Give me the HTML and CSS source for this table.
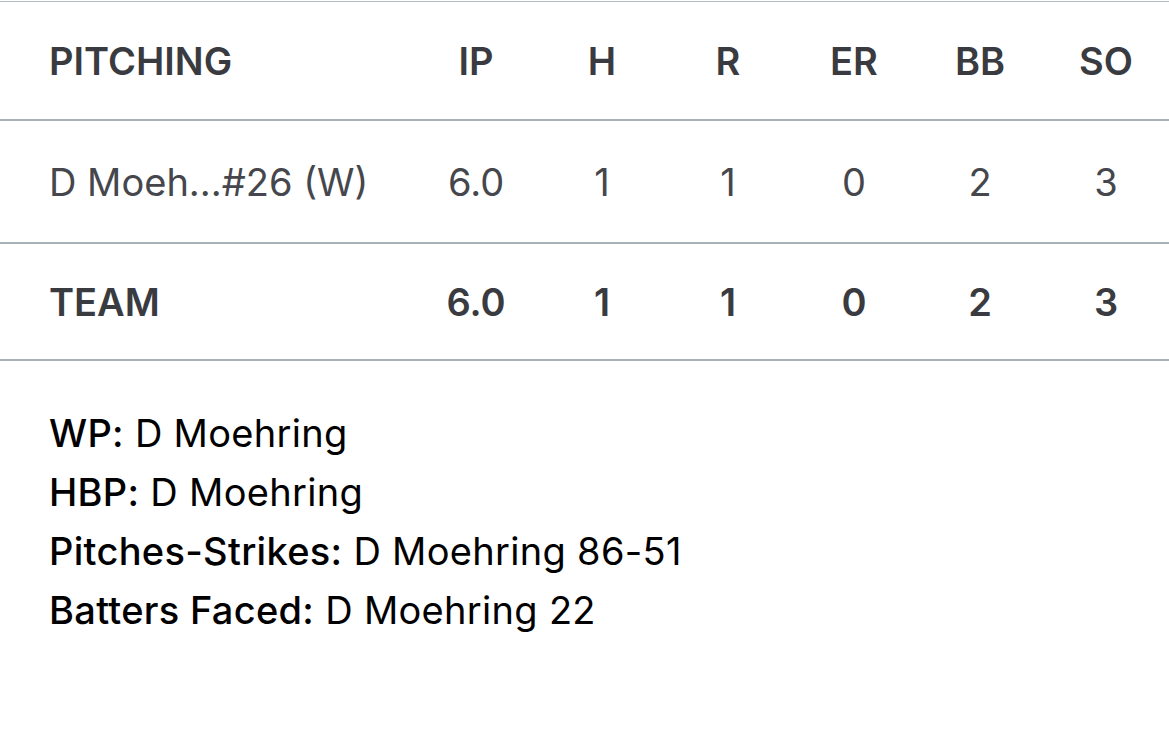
FILE: index.html
```html
<!DOCTYPE html>
<html>
<head>
<meta charset="utf-8">
<link rel="stylesheet" href="styles.css">
</head>
<body>
<div class="box">
  <div class="row head">
    <div class="name">PITCHING</div>
    <div class="c">IP</div><div class="c">H</div><div class="c">R</div><div class="c">ER</div><div class="c">BB</div><div class="c">SO</div>
  </div>
  <div class="row player">
    <div class="name">D Moeh...#26 (W)</div>
    <div class="c">6.0</div><div class="c">1</div><div class="c">1</div><div class="c">0</div><div class="c">2</div><div class="c">3</div>
  </div>
  <div class="row team">
    <div class="name">TEAM</div>
    <div class="c">6.0</div><div class="c">1</div><div class="c">1</div><div class="c">0</div><div class="c">2</div><div class="c">3</div>
  </div>
  <div class="notes">
    <div class="note"><span class="lbl">WP:</span> D Moehring</div>
    <div class="note"><span class="lbl">HBP:</span> D Moehring</div>
    <div class="note"><span class="lbl">Pitches-Strikes:</span> D Moehring 86-51</div>
    <div class="note"><span class="lbl">Batters Faced:</span> D Moehring 22</div>
  </div>
</div>
</body>
</html>
```
FILE: styles.css
```css
html, body {
  margin: 0;
  padding: 0;
  background: #ffffff;
}
body {
  font-family: Inter, "Noto Sans", "Liberation Sans", sans-serif;
  color: #000;
}
.box {
  margin-top: 1px;
  border-top: 1px solid #b3bcc0;
}
.row {
  display: grid;
  grid-template-columns: 413px repeat(6, 1fr);
  align-items: center;
  border-bottom: 2px solid #a8b1b6;
  color: #3a3b40;
  font-size: 38px;
}
.head { height: 117px; font-weight: 600; }
.player { height: 121px; font-weight: 400; color: #45474c; }
.team { height: 115px; font-weight: 600; }
.name { padding-left: 49px; white-space: nowrap; }
.c { text-align: center; }
.notes {
  padding: 43px 0 0 49px;
  font-size: 38px;
  line-height: 59px;
  letter-spacing: 0.3px;
}
.lbl { font-weight: 500; }
```
